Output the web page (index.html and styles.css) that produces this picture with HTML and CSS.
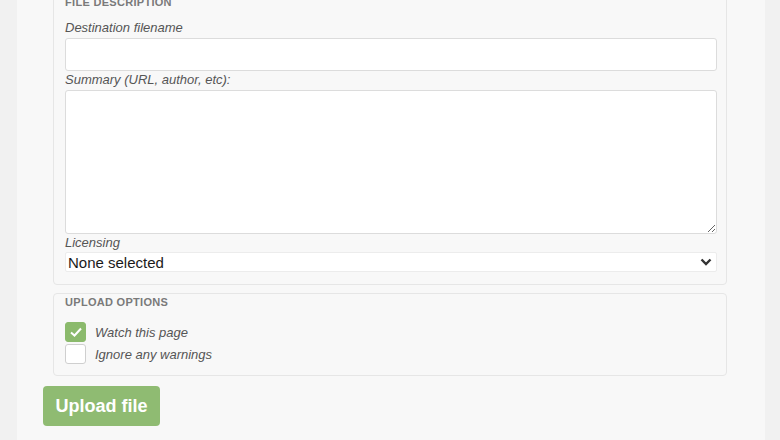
FILE: index.html
```html
<!DOCTYPE html>
<html lang="en">
<head>
<meta charset="UTF-8">
<title>Upload file</title>
<link rel="stylesheet" href="styles.css">
</head>
<body>
<div class="page">
    <div class="box box-desc">
        <div class="legend">File description</div>
        <label class="field-label" for="dest">Destination filename</label>
        <input class="text-input" id="dest" type="text">
        <label class="field-label" for="summary">Summary (URL, author, etc):</label>
        <textarea class="text-area" id="summary"></textarea>
        <label class="field-label" for="licensing">Licensing</label>
        <div class="select-wrap">
            <select class="select" id="licensing">
                <option>None selected</option>
            </select>
            <svg class="chevron" width="12" height="8" viewBox="0 0 12 8"><path d="M1.5 1.5 L6 6 L10.5 1.5" fill="none" stroke="#333" stroke-width="2.4"/></svg>
        </div>
    </div>

    <div class="box box-options">
        <div class="legend">Upload options</div>
        <div class="check-row">
            <span class="check checked">
                <svg width="14" height="12" viewBox="0 0 14 12"><path d="M2 6.5 L5.5 9.5 L12 2.5" fill="none" stroke="#fff" stroke-width="2"/></svg>
            </span>
            <span class="check-label">Watch this page</span>
        </div>
        <div class="check-row">
            <span class="check"></span>
            <span class="check-label">Ignore any warnings</span>
        </div>
    </div>

    <button class="upload-button">Upload file</button>
</div>
</body>
</html>
```

FILE: styles.css
```css
body {
    margin: 0;
    background-color: #f1f1f1;
    font-family: "Liberation Sans", Arial, sans-serif;
    overflow: hidden;
}
.page {
    margin-left: 17px;
    margin-top: -7px;
    width: 748px;
    height: 460px;
    background-color: #f8f8f8;
}

/* blocs */
.box {
    margin-left: 36px;
    width: 674px;
    box-sizing: border-box;
    border: 1px solid #e6e6e6;
    border-radius: 4px;
}
.box-desc {
    display: flex;
    flex-direction: column;
    padding: 2px 10px 12px 11px;
}
.box-options {
    margin-top: 8px;
    padding: 2px 11px 11px 11px;
}
.legend {
    font-size: 11px;
    line-height: 12px;
    font-weight: bold;
    text-transform: uppercase;
    color: #7a7a7a;
    letter-spacing: 0.3px;
}
.field-label {
    font-size: 13px;
    line-height: 14px;
    font-style: italic;
    color: #555;
    margin-top: 2px;
}
.box-desc .legend + .field-label {
    margin-top: 13px;
}

/* champs */
.text-input,
.text-area {
    box-sizing: border-box;
    width: 652px;
    border: 1px solid #dcdcdc;
    border-radius: 3px;
    background-color: #fff;
    margin: 3px 0 0 0;
    padding: 0;
    outline: none;
}
.text-input {
    height: 33px;
}
.text-area {
    height: 144px;
    resize: vertical;
    display: block;
}
.select-wrap {
    position: relative;
    margin-top: 2px;
    width: 652px;
}
.select {
    appearance: none;
    -webkit-appearance: none;
    box-sizing: border-box;
    display: block;
    width: 652px;
    height: 20px;
    border: 1px solid #ececec;
    border-radius: 2px;
    background-color: #fff;
    font-family: "Liberation Sans", Arial, sans-serif;
    font-size: 15px;
    color: #1a1a1a;
    padding: 0 0 0 2px;
    margin: 0;
}
.chevron {
    position: absolute;
    right: 5px;
    top: 6px;
}

/* cases */
.check-row {
    display: flex;
    align-items: center;
    gap: 9px;
    height: 20px;
    margin-top: 2px;
}
.legend + .check-row {
    margin-top: 14px;
}
.check {
    box-sizing: border-box;
    width: 21px;
    height: 20px;
    border: 1px solid #cfcfcf;
    border-radius: 3px;
    background-color: #fff;
    display: flex;
    align-items: center;
    justify-content: center;
}
.check.checked {
    background-color: #8bba6c;
    border-color: #8bba6c;
}
.check-label {
    font-size: 13px;
    font-style: italic;
    color: #555;
}

/* bouton */
.upload-button {
    margin: 10px 0 0 26px;
    width: 117px;
    height: 40px;
    border: none;
    border-radius: 4px;
    background-color: #8fbb72;
    color: #fff;
    font-family: "Liberation Sans", Arial, sans-serif;
    font-size: 18px;
    font-weight: bold;
    cursor: pointer;
}
```
